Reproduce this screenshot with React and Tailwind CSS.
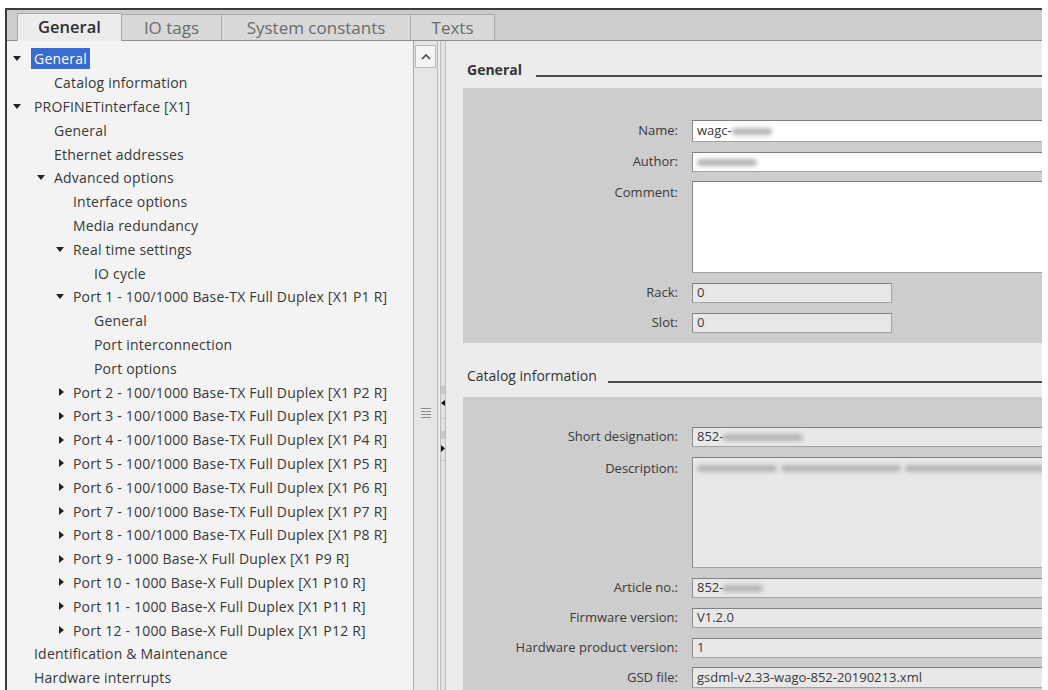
import React from 'react';

const tree = [
  { t: 'General', l: 0, a: 'down', sel: true },
  { t: 'Catalog information', l: 1 },
  { t: 'PROFINETinterface [X1]', l: 0, a: 'down' },
  { t: 'General', l: 1 },
  { t: 'Ethernet addresses', l: 1 },
  { t: 'Advanced options', l: 1, a: 'down' },
  { t: 'Interface options', l: 2 },
  { t: 'Media redundancy', l: 2 },
  { t: 'Real time settings', l: 2, a: 'down' },
  { t: 'IO cycle', l: 3 },
  { t: 'Port 1 - 100/1000 Base-TX Full Duplex [X1 P1 R]', l: 2, a: 'down' },
  { t: 'General', l: 3 },
  { t: 'Port interconnection', l: 3 },
  { t: 'Port options', l: 3 },
  { t: 'Port 2 - 100/1000 Base-TX Full Duplex [X1 P2 R]', l: 2, a: 'right' },
  { t: 'Port 3 - 100/1000 Base-TX Full Duplex [X1 P3 R]', l: 2, a: 'right' },
  { t: 'Port 4 - 100/1000 Base-TX Full Duplex [X1 P4 R]', l: 2, a: 'right' },
  { t: 'Port 5 - 100/1000 Base-TX Full Duplex [X1 P5 R]', l: 2, a: 'right' },
  { t: 'Port 6 - 100/1000 Base-TX Full Duplex [X1 P6 R]', l: 2, a: 'right' },
  { t: 'Port 7 - 100/1000 Base-TX Full Duplex [X1 P7 R]', l: 2, a: 'right' },
  { t: 'Port 8 - 100/1000 Base-TX Full Duplex [X1 P8 R]', l: 2, a: 'right' },
  { t: 'Port 9 - 1000 Base-X Full Duplex [X1 P9 R]', l: 2, a: 'right' },
  { t: 'Port 10 - 1000 Base-X Full Duplex [X1 P10 R]', l: 2, a: 'right' },
  { t: 'Port 11 - 1000 Base-X Full Duplex [X1 P11 R]', l: 2, a: 'right' },
  { t: 'Port 12 - 1000 Base-X Full Duplex [X1 P12 R]', l: 2, a: 'right' },
  { t: 'Identification & Maintenance', l: 0 },
  { t: 'Hardware interrupts', l: 0 },
];

const levelPad = ['pl-[4px]', 'pl-[24px]', 'pl-[43px]', 'pl-[64px]'];

function Arrow({ dir }) {
  if (dir === 'down')
    return (
      <svg width="8" height="5" viewBox="0 0 8 5">
        <polygon points="0,0 8,0 4,5" fill="#222" />
      </svg>
    );
  if (dir === 'right')
    return (
      <svg width="5" height="8" viewBox="0 0 5 8">
        <polygon points="0,0 5,4 0,8" fill="#222" />
      </svg>
    );
  return null;
}

// blurred-out value (redacted in the screenshot)
function Blur({ w }) {
  return <span className={`inline-block h-[7px] ${w} bg-[#b4b4b4] blur-[2px] rounded-sm`} />;
}

function Tabs() {
  return (
    <div className="h-[31px] bg-[#cccccc] border-b border-[#8f8f8f] flex items-end pl-[10px]">
      <div className="w-[105px] h-[28px] -mb-px bg-[#ececec] border border-b-0 border-[#a9a9a9] flex items-center justify-center text-[16.5px] font-semibold text-[#2e2e2e]">
        General
      </div>
      <div className="w-[100px] h-[26px] bg-[#d8d8d8] border-t border-r border-[#a9a9a9] flex items-center justify-center text-[17px] text-[#6a6a6a]">
        IO tags
      </div>
      <div className="w-[189px] h-[26px] bg-[#d8d8d8] border-t border-r border-[#a9a9a9] flex items-center justify-center text-[17px] text-[#6a6a6a]">
        System constants
      </div>
      <div className="w-[84px] h-[26px] bg-[#d8d8d8] border-t border-r border-[#a9a9a9] flex items-center justify-center text-[17px] text-[#6a6a6a]">
        Texts
      </div>
    </div>
  );
}

function Tree() {
  return (
    <div className="w-[406px] bg-[#f3f3f3] pt-[6px] text-[14px] tracking-[0.2px] text-[#383838]">
      {tree.map((n, i) => (
        <div key={i} className={`h-[23.8px] flex items-center ${levelPad[n.l]}`}>
          <div className={`w-[23px] flex justify-end ${n.l === 0 ? 'pr-[13px]' : 'pr-[9px]'}`}>
            <Arrow dir={n.a} />
          </div>
          {n.sel ? (
            <span className="-ml-[3px] px-[3px] bg-[#3a6bcf] text-white leading-[21px]">{n.t}</span>
          ) : (
            <span className="whitespace-nowrap">{n.t}</span>
          )}
        </div>
      ))}
    </div>
  );
}

function Scrollbar() {
  return (
    <div className="w-[24px] bg-[#e6e6e6] border-l border-[#a8a8a8] flex flex-col items-center">
      <div className="mt-[4px] w-[21px] h-[23px] bg-[#f4f4f4] border border-[#b8b8b8] flex items-center justify-center">
        <svg width="10" height="6" viewBox="0 0 10 6">
          <polyline points="1,5 5,1 9,5" fill="none" stroke="#444" strokeWidth="1.6" />
        </svg>
      </div>
      <div className="mt-[340px] flex flex-col gap-[2px]">
        <span className="block w-[10px] h-px bg-[#8c8c8c]" />
        <span className="block w-[10px] h-px bg-[#8c8c8c]" />
        <span className="block w-[10px] h-px bg-[#8c8c8c]" />
        <span className="block w-[10px] h-px bg-[#8c8c8c]" />
      </div>
    </div>
  );
}

function Splitter() {
  return (
    <div className="w-[11px] bg-[#ececec] border-l border-[#b5b5b5] flex flex-col items-center">
      <div className="w-[6px] flex-1 bg-[#e2e2e2] border-x border-[#bdbdbd] flex flex-col items-center pt-[345px] gap-[6px]">
        <span className="block w-[4px] h-[8px] bg-[#c8c8c8]" />
        <svg width="4" height="6" viewBox="0 0 4 6">
          <polygon points="4,0 0,3 4,6" fill="#111" />
        </svg>
        <span className="block w-[4px] h-px bg-[#c8c8c8] mt-[6px]" />
        <span className="block w-[4px] h-[8px] bg-[#c8c8c8] mt-[6px]" />
        <svg width="4" height="7" viewBox="0 0 4 7">
          <polygon points="0,0 4,3.5 0,7" fill="#111" />
        </svg>
        <span className="block w-[4px] h-px bg-[#c8c8c8] mt-[2px]" />
      </div>
    </div>
  );
}

function Field({ label, h, mt, white, w, children, top }) {
  return (
    <div className={`grid grid-cols-[215px_1fr] gap-x-[14px] ${mt}`}>
      <div className={`text-right text-[13px] text-[#3a3a3a] ${top ? 'pt-[2px]' : 'flex items-center justify-end'}`}>
        {label}
      </div>
      <div
        className={`${h} ${w || '-mr-[4px]'} ${white ? 'bg-white' : 'bg-[#e8e8e8]'} border border-[#a2a2a2] border-t-[#808080] border-l-[#8a8a8a] pl-[4px] text-[13px] text-[#383838] flex ${top ? 'items-start pt-[3px]' : 'items-center'} overflow-hidden`}
      >
        {children}
      </div>
    </div>
  );
}

function Heading({ children, bold, h, pb, line }) {
  return (
    <div className={`${h} flex items-end pl-[4px] ${pb}`}>
      <span className={`text-[#333] whitespace-nowrap ${bold ? 'font-bold text-[14px]' : 'text-[14px]'} leading-[17px]`}>
        {children}
      </span>
      <div className={`flex-1 h-[2px] bg-[#4a4a4a] mb-[1px] ${line}`} />
    </div>
  );
}

function Properties() {
  return (
    <div className="flex-1 bg-[#ececec] pl-[15px] overflow-hidden">
      <Heading bold h="h-[47px]" pb="pb-[10px]" line="ml-[14px]">General</Heading>
      <div className="bg-[#cdcdcd] pt-[32px] pb-[10px] overflow-hidden">
        <Field label="Name:" h="h-[22px]" white>
          <span>wagc-</span>
          <Blur w="w-[40px]" />
        </Field>
        <Field label="Author:" h="h-[20px]" mt="mt-[10px]" white>
          <Blur w="w-[60px]" />
        </Field>
        <Field label="Comment:" h="h-[92px]" mt="mt-[9px]" white top />
        <Field label="Rack:" h="h-[20px]" mt="mt-[10px]" w="w-[200px]">0</Field>
        <Field label="Slot:" h="h-[20px]" mt="mt-[10px]" w="w-[200px]">0</Field>
      </div>
      <Heading h="h-[54px]" pb="pb-[13px]" line="ml-[11px]">Catalog information</Heading>
      <div className="bg-[#cdcdcd] pt-[30px] pb-[20px] overflow-hidden">
        <Field label="Short designation:" h="h-[20px]">
          <span>852-</span>
          <Blur w="w-[80px]" />
        </Field>
        <Field label="Description:" h="h-[111px]" mt="mt-[10px]" top>
          <span className="mt-[4px] flex gap-[4px]">
            <Blur w="w-[80px]" />
            <Blur w="w-[120px]" />
            <Blur w="w-[140px]" />
          </span>
        </Field>
        <Field label="Article no.:" h="h-[20px]" mt="mt-[10px]">
          <span>852-</span>
          <Blur w="w-[40px]" />
        </Field>
        <Field label="Firmware version:" h="h-[20px]" mt="mt-[10px]">V1.2.0</Field>
        <Field label="Hardware product version:" h="h-[20px]" mt="mt-[10px]">1</Field>
        <Field label="GSD file:" h="h-[21px]" mt="mt-[9px]">gsdml-v2.33-wago-852-20190213.xml</Field>
      </div>
    </div>
  );
}

export default function App() {
  return (
    <div className="w-[1048px] h-[690px] bg-white pt-[8px] pl-[5px] pr-[6px] overflow-hidden font-['Open_Sans',sans-serif]">
      <div className="h-[682px] border-t-2 border-l-2 border-[#3c3c3c] flex flex-col overflow-hidden">
        <Tabs />
        <div className="flex-1 flex overflow-hidden">
          <Tree />
          <Scrollbar />
          <Splitter />
          <Properties />
        </div>
      </div>
    </div>
  );
}
